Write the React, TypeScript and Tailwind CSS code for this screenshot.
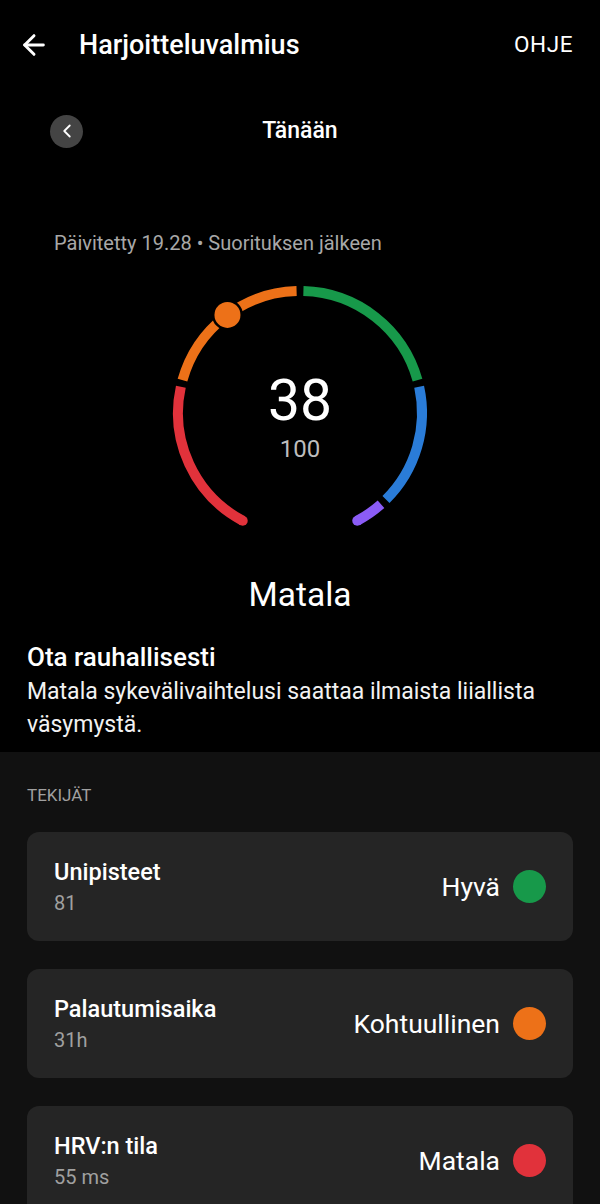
import { ArrowLeft, ChevronLeft } from 'lucide-react';

const CX = 150;
const CY = 143;
const R = 122;

// angle in degrees, clockwise from 12 o'clock
function pt(deg: number) {
  const a = ((deg - 90) * Math.PI) / 180;
  return { x: CX + R * Math.cos(a), y: CY + R * Math.sin(a) };
}

function arc(from: number, to: number) {
  const s = pt(from);
  const e = pt(to);
  const large = to - from > 180 ? 1 : 0;
  return `M ${s.x.toFixed(2)} ${s.y.toFixed(2)} A ${R} ${R} 0 ${large} 1 ${e.x.toFixed(2)} ${e.y.toFixed(2)}`;
}

// score 0..100 mapped over 208deg .. 512deg
const toDeg = (v: number) => 208 + (v / 100) * 304;

const segments = [
  { from: 0, to: 25, color: '#e1323b', capStart: true },
  { from: 25, to: 50, color: '#ed7118' },
  { from: 50, to: 75, color: '#17994a' },
  { from: 75, to: 95, color: '#2a7cd8' },
  { from: 95, to: 100, color: '#8b5cf6', capEnd: true },
];

function Gauge({ score }: { score: number }) {
  const gap = 1.6;
  const m = pt(toDeg(score));
  return (
    <svg width="300" height="270" viewBox="0 0 300 270">
      {segments.map((s) => {
        const a = toDeg(s.from) + (s.capStart ? 0 : gap);
        const b = toDeg(s.to) - (s.capEnd ? 0 : gap);
        return (
          <g key={s.from}>
            <path d={arc(a, b)} stroke={s.color} strokeWidth="10" fill="none" strokeLinecap="butt" />
            {s.capStart && <circle cx={pt(a).x} cy={pt(a).y} r="5" fill={s.color} />}
            {s.capEnd && <circle cx={pt(b).x} cy={pt(b).y} r="5" fill={s.color} />}
          </g>
        );
      })}
      <circle cx={m.x} cy={m.y} r="15.5" fill="#000" />
      <circle cx={m.x} cy={m.y} r="13" fill="#ed7118" />
    </svg>
  );
}

const factors = [
  { title: 'Unipisteet', value: '81', label: 'Hyvä', color: 'bg-[#17994a]' },
  { title: 'Palautumisaika', value: '31h', label: 'Kohtuullinen', color: 'bg-[#ed7118]' },
  { title: 'HRV:n tila', value: '55 ms', label: 'Matala', color: 'bg-[#e1323b]' },
];

export default function App() {
  return (
    <div className="w-[600px] h-[1204px] overflow-hidden bg-black text-white font-['Roboto',sans-serif]">
      {/* Top bar */}
      <div className="h-[90px] flex items-center px-[18px]">
        <ArrowLeft className="w-[32px] h-[32px] text-white" strokeWidth={2.2} />
        <h1 className="ml-[29px] text-[27px] font-medium">Harjoitteluvalmius</h1>
        <span className="ml-auto mr-[9px] text-[22.5px] tracking-wide">OHJE</span>
      </div>

      {/* Day selector */}
      <div className="h-[82px] relative flex items-center justify-center">
        <div className="absolute left-[50px] w-[33px] h-[33px] rounded-full bg-[#444] flex items-center justify-center">
          <ChevronLeft className="w-[22px] h-[22px] text-white" strokeWidth={2} />
        </div>
        <span className="text-[23px] font-medium">Tänään</span>
      </div>

      <p className="mt-[59px] pl-[54px] text-[20px] leading-[24px] text-[#a8a8a8]">
        Päivitetty 19.28 • Suorituksen jälkeen
      </p>

      {/* Gauge */}
      <div className="mt-[15px] relative w-[300px] h-[270px] mx-auto">
        <Gauge score={38} />
        <div className="absolute left-0 right-0 top-[101px] flex flex-col items-center">
          <span className="text-[57px] leading-[60px]">38</span>
          <span className="mt-[4px] text-[24px] leading-[28px] text-[#bdbdbd]">100</span>
        </div>
      </div>

      <div className="mt-[36px] text-center text-[33.5px] leading-[38px]">Matala</div>

      <div className="px-[27px] pb-[11px]">
        <h2 className="mt-[28px] text-[26px] leading-[30px] font-medium">Ota rauhallisesti</h2>
        <p className="mt-[3px] text-[23px] leading-[33px] text-[#f2f2f2]">
          Matala sykevälivaihtelusi saattaa ilmaista liiallista väsymystä.
        </p>
      </div>

      {/* Factors */}
      <div className="bg-[#111111] px-[27px] pt-[33px] pb-[40px]">
        <div className="text-[17px] leading-[20px] text-[#a0a0a0]">TEKIJÄT</div>
        <div className="mt-[27px] flex flex-col gap-[28px]">
          {factors.map((f) => (
            <div
              key={f.title}
              className="h-[109px] rounded-[12px] bg-[#252525] flex items-center justify-between pl-[27px] pr-[27px]"
            >
              <div>
                <div className="text-[23.5px] leading-[26px] font-medium">{f.title}</div>
                <div className="mt-[7px] text-[20px] leading-[22px] text-[#a0a0a0]">{f.value}</div>
              </div>
              <div className="flex items-center gap-[13px]">
                <span className="text-[26.5px]">{f.label}</span>
                <span className={`w-[33px] h-[33px] rounded-full ${f.color}`} />
              </div>
            </div>
          ))}
        </div>
      </div>
    </div>
  );
}
